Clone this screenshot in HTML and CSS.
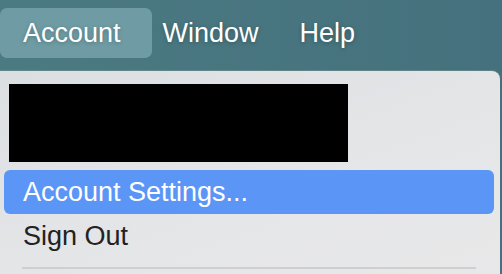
FILE: index.html
```html
<!DOCTYPE html>
<html lang="en">
<head>
    <meta charset="UTF-8">
    <title>Account menu</title>
    <link rel="stylesheet" href="styles.css">
</head>
<body>

    <div class="menubar">
        <div class="bar_item active">Account</div>
        <div class="bar_item">Window</div>
        <div class="bar_item">Help</div>
    </div>

    <div class="dropdown">
        <div class="redacted"></div>
        <ul class="menu_list">
            <li class="selected">Account Settings...</li>
            <li>Sign Out</li>
        </ul>
        <div class="separator"></div>
    </div>

</body>
</html>
```

FILE: styles.css
```css
*{
    box-sizing: border-box;
    font-family: 'Liberation Sans', Arial, sans-serif;
}
body{
    margin: 0;
    width: 502px;
    height: 274px;
    overflow: hidden;
    background: linear-gradient(90deg, #4c7a82, #44717d);
}
ul{
    margin: 0;
    padding: 0;
}
li{
    list-style: none;
}

/* 上方選單列 */
.menubar{
    display: flex;
    height: 71px;
    padding: 8px 0 0 0;
    color: #fff;
    font-size: 27px;
}
.bar_item{
    height: 50px;
    line-height: 50px;
    border-radius: 7px;
    text-shadow: 0 1px 4px rgba(0, 0, 0, 0.25);
}
.bar_item.active{
    /* 選取中的項目，左邊超出畫面 */
    background-color: #6f9ca4;
    padding: 0 31px 0 23px;
    margin: 0 11px 0 0;
}
.bar_item + .bar_item{
    padding: 0 20px 0 0;
}
.bar_item:last-child{
    padding-left: 21px;
}

/* 下拉選單 */
.dropdown{
    width: 500px;
    height: 210px;
    background: linear-gradient(160deg, #dcdfe2, #e5e6e8 60%, #e8e8e9);
    border-radius: 0 8px 0 0;
    padding: 13px 6px 0 4px;
    box-shadow: 0 -1px 0 rgba(120, 150, 140, 0.5);
}
.redacted{
    width: 339px;
    height: 78px;
    margin: 0 0 8px 5px;
    background-color: #000;
}
.menu_list li{
    height: 44px;
    line-height: 44px;
    padding: 0 0 0 19px;
    font-size: 27px;
    color: #222;
    border-radius: 6px;
}
.menu_list li.selected{
    background-color: #5b95f6;
    color: #fff;
}
.separator{
    height: 2px;
    margin: 9px 18px 0 18px;
    background-color: #cfcfd1;
}
```
